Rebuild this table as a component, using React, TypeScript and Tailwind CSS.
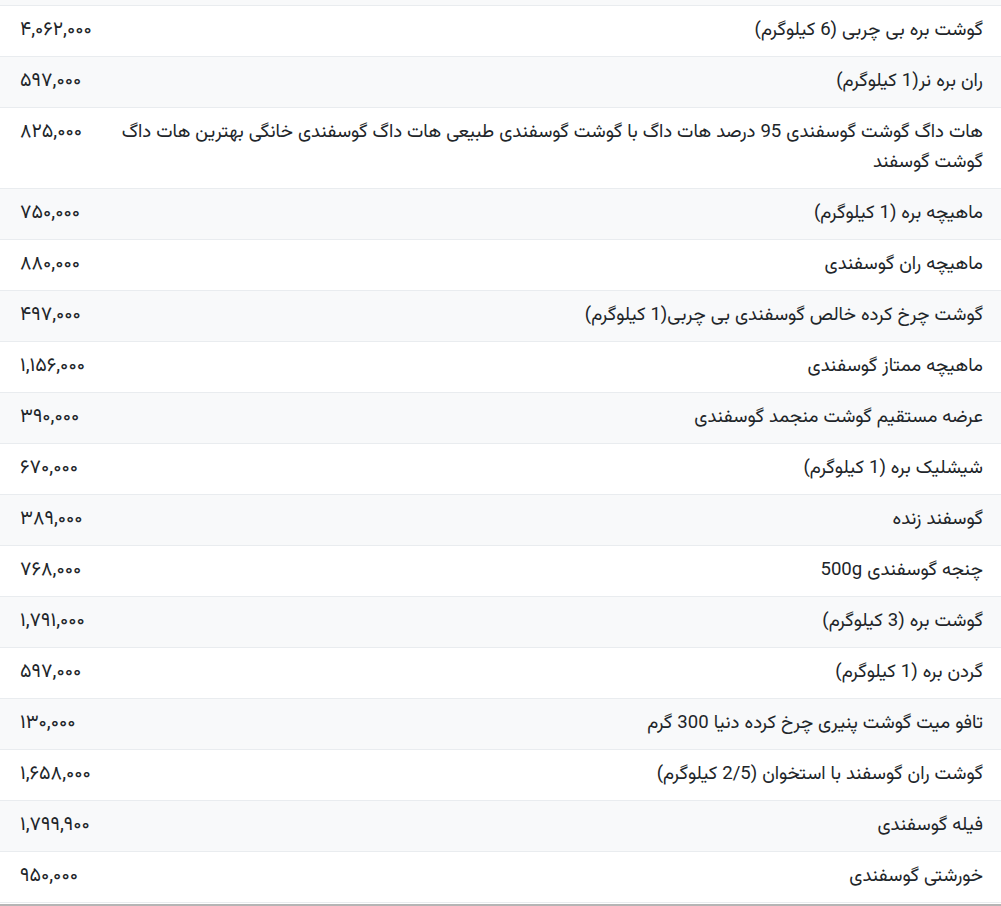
const rows: [string, string][] = [
  ['گوشت بره بی چربی (6 کیلوگرم)', '۴,۰۶۲,۰۰۰'],
  ['ران بره نر(1 کیلوگرم)', '۵۹۷,۰۰۰'],
  ['هات داگ گوشت گوسفندی 95 درصد هات داگ با گوشت گوسفندی طبیعی هات داگ گوسفندی خانگی بهترین هات داگ گوشت گوسفند', '۸۲۵,۰۰۰'],
  ['ماهیچه بره (1 کیلوگرم)', '۷۵۰,۰۰۰'],
  ['ماهیچه ران گوسفندی', '۸۸۰,۰۰۰'],
  ['گوشت چرخ کرده خالص گوسفندی بی چربی(1 کیلوگرم)', '۴۹۷,۰۰۰'],
  ['ماهیچه ممتاز گوسفندی', '۱,۱۵۶,۰۰۰'],
  ['عرضه مستقیم گوشت منجمد گوسفندی', '۳۹۰,۰۰۰'],
  ['شیشلیک بره (1 کیلوگرم)', '۶۷۰,۰۰۰'],
  ['گوسفند زنده', '۳۸۹,۰۰۰'],
  ['چنجه گوسفندی 500g', '۷۶۸,۰۰۰'],
  ['گوشت بره (3 کیلوگرم)', '۱,۷۹۱,۰۰۰'],
  ['گردن بره (1 کیلوگرم)', '۵۹۷,۰۰۰'],
  ['تافو میت گوشت پنیری چرخ کرده دنیا 300 گرم', '۱۳۰,۰۰۰'],
  ['گوشت ران گوسفند با استخوان (2/5 کیلوگرم)', '۱,۶۵۸,۰۰۰'],
  ['فیله گوسفندی', '۱,۷۹۹,۹۰۰'],
  ['خورشتی گوسفندی', '۹۵۰,۰۰۰'],
];

export default function App() {
  return (
    <div
      dir="rtl"
      className="w-[1001px] bg-white text-[18.6px] text-[#212529]"
      style={{ fontFamily: 'Vazirmatn, Roboto, "DejaVu Sans", sans-serif' }}
    >
      {/* tail of the row above */}
      <div className="h-[5px] bg-[#f8f9fa]" />

      {rows.map(([name, price], i) => (
        <div
          key={i}
          className={`grid grid-cols-[1fr_100px] border-t border-[#e9ecef] ${
            i % 2 === 1 ? 'bg-[#f8f9fa]' : 'bg-white'
          }`}
        >
          <div className="py-[10px] pr-[18px] pl-3 leading-[30px] text-right">{name}</div>
          <div className="py-[10px] pl-5 leading-[30px] text-left text-[19.6px]">{price}</div>
        </div>
      ))}

      <div className="border-t border-[#e9ecef] h-[2px]" />
      <div className="h-[2px] bg-[#b5b5b5]" />
    </div>
  );
}
